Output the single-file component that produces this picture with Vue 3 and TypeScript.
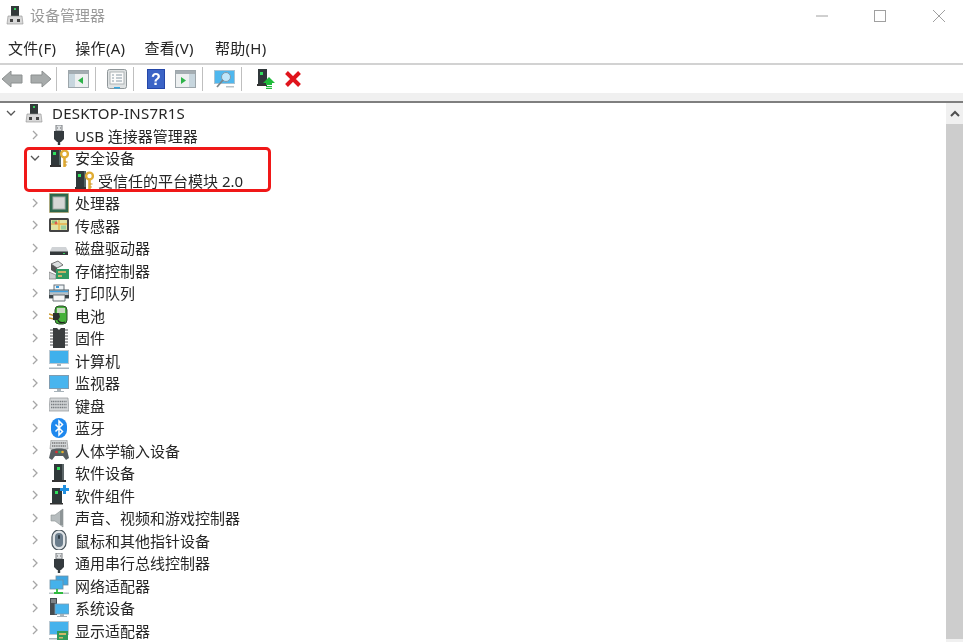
<script setup lang="ts">
interface Node { label: string; icon: string; open?: boolean; child?: boolean }
const rows: Node[] = [
  { label: 'USB 连接器管理器', icon: 'usb' },
  { label: '安全设备', icon: 'sec', open: true },
  { label: '受信任的平台模块 2.0', icon: 'sec', child: true },
  { label: '处理器', icon: 'cpu' },
  { label: '传感器', icon: 'sensor' },
  { label: '磁盘驱动器', icon: 'disk' },
  { label: '存储控制器', icon: 'storage' },
  { label: '打印队列', icon: 'printer' },
  { label: '电池', icon: 'battery' },
  { label: '固件', icon: 'firmware' },
  { label: '计算机', icon: 'computer' },
  { label: '监视器', icon: 'monitor' },
  { label: '键盘', icon: 'keyboard' },
  { label: '蓝牙', icon: 'bt' },
  { label: '人体学输入设备', icon: 'hid' },
  { label: '软件设备', icon: 'soft' },
  { label: '软件组件', icon: 'softc' },
  { label: '声音、视频和游戏控制器', icon: 'sound' },
  { label: '鼠标和其他指针设备', icon: 'mouse' },
  { label: '通用串行总线控制器', icon: 'usb' },
  { label: '网络适配器', icon: 'net' },
  { label: '系统设备', icon: 'sys' },
  { label: '显示适配器', icon: 'display' },
]
const menus = ['文件(F)', '操作(A)', '查看(V)', '帮助(H)']
</script>

<template>
  <div class="win">
    <svg class="defs" aria-hidden="true">
      <symbol id="host" viewBox="0 0 20 20">
        <path d="M6 1h8v10H6z" fill="#33393a"/><rect x="9" y="3" width="2" height="2" fill="#35d05a"/>
        <path d="M3 11h14l1 8H2z" fill="#d9d9d9" stroke="#8f8f8f" stroke-width=".6"/>
        <rect x="5" y="14" width="3" height="3" fill="#444"/><rect x="12" y="14" width="3" height="3" fill="#444"/>
      </symbol>
      <symbol id="tower" viewBox="0 0 20 20">
        <path d="M5 1h10v16H5z" fill="#30383a"/><path d="M13 1h2v16h-2z" fill="#5c6668"/>
        <rect x="8" y="4" width="3" height="3" fill="#2fe05c"/><path d="M3 17h14v2H3z" fill="#333"/>
      </symbol>
      <symbol id="usb" viewBox="0 0 20 20">
        <path d="M7 0h6v6H7z" fill="#dfe2e4" stroke="#7a7f82"/><path d="M5 6h10v8l-3 3H8l-3-3z" fill="#343a3e"/>
        <path d="M10 16v4" stroke="#343a3e" stroke-width="2.400"/><path d="M8 3h1M11 3h1" stroke="#666"/>
      </symbol>
      <symbol id="sec" viewBox="0 0 20 20">
        <path d="M2 1h10v16H2z" fill="#30383a"/><path d="M10 1h2v16h-2z" fill="#566"/>
        <rect x="4" y="4" width="3" height="3" fill="#2fe05c"/><path d="M1 17h11v2H1z" fill="#333"/>
        <circle cx="15.500" cy="6" r="3.400" fill="none" stroke="#e0ad35" stroke-width="2.400"/>
        <path d="M15.500 9v10" stroke="#e0ad35" stroke-width="2.600"/><path d="M15.500 14h3M15.500 17h2.400" stroke="#c9932a" stroke-width="1.200"/>
      </symbol>
      <symbol id="cpu" viewBox="0 0 20 20">
        <rect x=".5" y=".5" width="19" height="19" fill="#2a5f48" stroke="#c0a25a" stroke-dasharray="1 1"/>
        <rect x="1.500" y="1.500" width="17" height="17" fill="#2f6b4e"/>
        <rect x="4" y="4" width="12" height="12" fill="#d6d8d6" stroke="#a8aeab"/>
      </symbol>
      <symbol id="sensor" viewBox="0 0 20 20">
        <rect x="0" y="3" width="20" height="14" rx="1.500" fill="#444"/>
        <rect x="2" y="5" width="16" height="10" fill="#dfe3a2"/>
        <path d="M2 9h16M10 5v10" stroke="#e8b04b" stroke-width="1.400"/>
        <rect x="3" y="5.500" width="5" height="3" fill="#8fc77a"/><rect x="12" y="10.500" width="5" height="4" fill="#9ad0a0"/>
        <circle cx="7" cy="8" r="1.400" fill="#e05a50"/>
      </symbol>
      <symbol id="disk" viewBox="0 0 20 20">
        <path d="M3 9h14l2 4v4H1v-4z" fill="#d0d3d6"/><path d="M1 13.500h18v3.500H1z" fill="#33383b"/>
        <rect x="14" y="15" width="2" height="1" fill="#39d060"/>
      </symbol>
      <symbol id="storage" viewBox="0 0 20 20">
        <path d="M2 4l7-3 5 4-6 3z" fill="#dcdfe0" stroke="#555" stroke-width=".8"/>
        <path d="M2 4l6 4v6L2 10z" fill="#555"/><path d="M0 12l7 3v4H0z" fill="#c9cdcf" stroke="#666" stroke-width=".6"/>
        <rect x="7" y="9" width="13" height="10" fill="#2f9a62"/><path d="M9 11h8v2H9zM9 15h4v2H9z" fill="#c9b36a"/>
      </symbol>
      <symbol id="printer" viewBox="0 0 20 20">
        <rect x="5" y="2" width="10" height="6" fill="#eef3f6" stroke="#68737a"/><path d="M7 4h3" stroke="#3b9ad8" stroke-width="2"/>
        <path d="M0 7h20v8H0z" fill="#b8c0c5" stroke="#4f5a60"/><path d="M1 8.500h18" stroke="#3fa0e0" stroke-width="1.400"/>
        <path d="M4 12h12v6H4z" fill="#f5f5f5" stroke="#6a7276"/><path d="M0 12h4v3H0zM16 12h4v3h-4z" fill="#3c4448"/>
      </symbol>
      <symbol id="battery" viewBox="0 0 20 20">
        <rect x="6" y="1" width="12" height="18" rx="4" fill="#45b13a" stroke="#2b4d2b"/>
        <path d="M8 3h8v5H8z" fill="#c8d8c2"/>
        <path d="M0 9l6 2M0 13l5 1" stroke="#c89a30" stroke-width="1.400"/>
        <path d="M4 8h6l1 4-2 3H4z" fill="#2d3230"/><path d="M9 15c1 3 4 3 7 2" stroke="#222" stroke-width="1.300" fill="none"/>
      </symbol>
      <symbol id="firmware" viewBox="0 0 20 20">
        <path d="M4 0h4l2 2 2-2h4v20H4z" fill="#3a3d3f"/>
        <path d="M1 2h3M1 5h3M1 8h3M1 11h3M1 14h3M1 17h3M16 2h3M16 5h3M16 8h3M16 11h3M16 14h3M16 17h3" stroke="#8a8c8e" stroke-width="1.400"/>
      </symbol>
      <symbol id="computer" viewBox="0 0 20 20">
        <rect x="0" y="0" width="20" height="14" fill="#b9c8d2"/><rect x="1" y="1" width="18" height="12" fill="#3fb0ec"/>
        <path d="M8 14h4v2H8z" fill="#a8b3ba"/><path d="M0 17.500h20V19H0z" fill="#a7b4bd"/>
      </symbol>
      <symbol id="monitor" viewBox="0 0 20 20">
        <rect x="0" y="2" width="20" height="14" fill="#7f9cb0"/><rect x="1" y="3" width="18" height="12" fill="#49b5ee"/>
        <path d="M8 16h4v2H8zM5 18h10v1H5z" fill="#a8b3ba"/>
      </symbol>
      <symbol id="keyboard" viewBox="0 0 20 20">
        <path d="M1 3h18l1 13H0z" fill="#d4d7d9" stroke="#8c9194" stroke-width=".7"/>
        <path d="M2 6.500h16M2 9.500h16M2 12.500h16" stroke="#777c80" stroke-width="1.500" stroke-dasharray="1.200 .6"/>
      </symbol>
      <symbol id="bt" viewBox="0 0 20 20">
        <rect x="2" y="0" width="16" height="20" rx="8" fill="#1e88ee"/>
        <path d="M6.500 6.500l7 7-3.500 3.500V3l3.500 3.500-7 7" fill="none" stroke="#fff" stroke-width="1.500"/>
      </symbol>
      <symbol id="hid" viewBox="0 0 20 20">
        <path d="M2 0h16l1 9H1z" fill="#d4d7d9" stroke="#888" stroke-width=".6"/>
        <path d="M3 3h14M3 6h14" stroke="#777" stroke-width="1.300" stroke-dasharray="1.200 .6"/>
        <path d="M2 10c2-2 14-2 16 0l2 8-3 2-3-4H6l-3 4-3-2z" fill="#565d61"/>
        <circle cx="7.500" cy="12" r="1.300" fill="#d33"/><circle cx="10.500" cy="12" r="1.300" fill="#3a6"/><circle cx="13.500" cy="12" r="1.300" fill="#e8b030"/>
      </symbol>
      <symbol id="soft" viewBox="0 0 20 20"><use href="#tower"/></symbol>
      <symbol id="softc" viewBox="0 0 20 20">
        <path d="M3 3h10v15H3z" fill="#30383a"/><rect x="6" y="6" width="3" height="3" fill="#2fe05c"/>
        <path d="M1 18h13v1.500H1z" fill="#333"/><path d="M14 0h3v3h3v3h-3v3h-3V6h-3V3h3z" fill="#1f8fe0"/>
      </symbol>
      <symbol id="sound" viewBox="0 0 20 20">
        <path d="M2 7h4l8-6v18l-8-6H2z" fill="#b6bcbe" stroke="#8a9092" stroke-width=".6"/><path d="M11 3v14h3V1z" fill="#8d9496"/>
      </symbol>
      <symbol id="mouse" viewBox="0 0 20 20">
        <rect x="3" y="0" width="14" height="20" rx="7" fill="#dfe3e6" stroke="#46525a" stroke-width="1.200"/>
        <rect x="6" y="3" width="8" height="14" rx="4" fill="#6b7d8c"/><rect x="9" y="5" width="2" height="4" rx="1" fill="#2f3c46"/>
      </symbol>
      <symbol id="net" viewBox="0 0 20 20">
        <rect x="7" y="1" width="12" height="9" fill="#3ea6e2" stroke="#6f8fa3" stroke-width=".8"/>
        <rect x="1" y="5" width="13" height="9" fill="#45b2ec" stroke="#6f8fa3" stroke-width=".8"/>
        <path d="M0 17.500h20V19H0z" fill="#bcc5c9"/><path d="M8 14v4M5 18h9" stroke="#2fbb3f" stroke-width="1.800"/>
      </symbol>
      <symbol id="sys" viewBox="0 0 20 20">
        <rect x="1" y="0" width="7" height="17" fill="#444b4f"/><path d="M2 2h5M2 4h5" stroke="#b5bcc0"/>
        <rect x="6" y="6" width="14" height="10" fill="#45b2ec" stroke="#7f9cb0" stroke-width=".8"/>
        <path d="M11 16h4v2h-4zM8 18h10v1H8z" fill="#a8b3ba"/>
      </symbol>
      <symbol id="display" viewBox="0 0 20 20">
        <rect x="0" y="1" width="20" height="14" fill="#b9c8d2"/><rect x="1" y="2" width="18" height="12" fill="#45b2ec"/>
        <path d="M0 18h9v1.500H0z" fill="#aab5bb"/><rect x="8" y="11" width="11" height="9" fill="#2f9a5a"/>
        <path d="M10 13h7v2h-7zM10 17h4v1.500h-4z" fill="#cdb868"/>
      </symbol>
    </svg>

    <header class="titlebar">
      <svg class="title-icon"><use href="#host"/></svg>
      <span class="title">设备管理器</span>
      <div class="caps">
        <svg width="14" height="14" viewBox="0 0 14 14"><path d="M2 7h12" stroke="#a0a0a0"/></svg>
        <svg width="14" height="14" viewBox="0 0 14 14"><rect x="1.500" y="1.500" width="11" height="11" fill="none" stroke="#a0a0a0"/></svg>
        <svg width="14" height="14" viewBox="0 0 14 14"><path d="M1 1l12 12M13 1L1 13" stroke="#a0a0a0"/></svg>
      </div>
    </header>

    <nav class="menubar"><span v-for="m in menus" :key="m">{{ m }}</span></nav>

    <div class="toolbar">
      <svg class="tb tb-back" width="22" height="18" viewBox="0 0 22 18"><path d="M1 9l9-8v4h11v8H10v4z" fill="#a7abab" stroke="#8c9090"/></svg>
      <svg class="tb tb-fwd" width="22" height="18" viewBox="0 0 22 18"><path d="M21 9l-9-8v4H1v8h11v4z" fill="#a7abab" stroke="#8c9090"/></svg>
      <i class="sep s1"></i>
      <svg class="tb" width="21" height="18" viewBox="0 0 21 18">
        <rect x=".5" y=".5" width="20" height="17" fill="#edf0f1" stroke="#9da6ab"/><path d="M1 1h19v3H1z" fill="#a4adb2"/>
        <path d="M1 4h6v13H1z" fill="#c7d6de"/><path d="M15 7v7l-5-3.500z" fill="#2eb34a"/>
      </svg>
      <i class="sep"></i>
      <svg class="tb" width="20" height="20" viewBox="0 0 20 20">
        <rect x=".5" y=".5" width="19" height="19" rx="2" fill="#dfe2e3" stroke="#8f9699"/><rect x="3" y="3" width="14" height="12" fill="#fbfbfb" stroke="#adb3b6"/>
        <path d="M5 6h2M9 6h6M5 9h2M9 9h6M5 12h2M9 12h6" stroke="#8a9aa5"/><path d="M7 18h6v1.500H7z" fill="#35a7e0"/>
      </svg>
      <i class="sep"></i>
      <svg class="tb tb-help" width="18" height="20" viewBox="0 0 18 20">
        <rect width="18" height="20" fill="#2446a8"/><path d="M1 1h16v18H1z" fill="#3b64c6"/>
        <text x="9" y="16" text-anchor="middle" class="q">?</text>
      </svg>
      <svg class="tb tb-view" width="21" height="18" viewBox="0 0 21 18">
        <rect x=".5" y=".5" width="20" height="17" fill="#edf0f1" stroke="#9da6ab"/><path d="M1 1h19v3H1z" fill="#a4adb2"/>
        <path d="M14 4h6v13h-6z" fill="#c7d6de"/><path d="M6 7v7l5-3.500z" fill="#2eb34a"/>
      </svg>
      <i class="sep"></i>
      <svg class="tb" width="21" height="19" viewBox="0 0 21 19">
        <rect x=".5" y=".5" width="20" height="13" fill="#4eb7ee" stroke="#a9c3d2"/>
        <circle cx="12" cy="7" r="4.500" fill="#bfe6fa" stroke="#7f9aab"/><path d="M9 10l-6 7" stroke="#7d868b" stroke-width="1.800"/>
        <path d="M12 16h8v1.500h-8z" fill="#b9c2c7"/>
      </svg>
      <i class="sep s2"></i>
      <svg class="tb" width="18" height="20" viewBox="0 0 18 20">
        <path d="M1 0h9v15H1z" fill="#30383a"/><rect x="3" y="3" width="3" height="3" fill="#2fe05c"/><path d="M0 15h10v2H0z" fill="#333"/>
        <path d="M12 8l6 6h-3v2H9v-2H6z" fill="#20bb3b"/><path d="M9 17h6v1.200H9zM9 19h6v1H9z" fill="#20bb3b"/>
      </svg>
      <svg class="tb tb-x" width="18" height="18" viewBox="0 0 18 18"><path d="M2.500 2.500l13 13M15.500 2.500l-13 13" stroke="#e0141c" stroke-width="4"/></svg>
    </div>

    <div class="strip"></div>

    <main class="body">
      <div class="tree">
        <div class="row root">
          <svg class="chev dark" viewBox="0 0 12 12"><path d="M2 4l4 4 4-4" fill="none"/></svg>
          <svg class="ico"><use href="#host"/></svg>
          <span>DESKTOP-INS7R1S</span>
        </div>
        <div v-for="r in rows" :key="r.label" class="row" :class="{ child: r.child }">
          <svg v-if="!r.child" class="chev" :class="{ dark: r.open }" viewBox="0 0 12 12">
            <path :d="r.open ? 'M2 4l4 4 4-4' : 'M4 2l4 4-4 4'" fill="none"/>
          </svg>
          <svg class="ico"><use :href="'#' + r.icon"/></svg>
          <span>{{ r.label }}</span>
        </div>
      </div>
      <div class="scroll">
        <div class="sb-up"><svg width="10" height="8" viewBox="0 0 10 8"><path d="M1 6l4-4 4 4" fill="none" stroke="#505050" stroke-width="2"/></svg></div>
        <div class="sb-thumb"></div>
      </div>
      <div class="mark"></div>
    </main>
  </div>
</template>

<style scoped>
.win {
  width: 963px;
  height: 642px;
  overflow: hidden;
  position: relative;
  background: #fff;
  color: #262626;
  font: 15px "Noto Sans", "Noto Sans CJK SC", sans-serif;
  filter: blur(0.35px);
  display: flex;
  flex-direction: column;
}
.defs { position: absolute; width: 0; height: 0; }
.titlebar {
  height: 32px;
  flex: none;
  display: flex;
  align-items: center;
  padding-left: 5px;
}
.title-icon { width: 20px; height: 20px; margin-bottom: 3px; }
.title { margin-left: 5px; margin-bottom: 4px; color: #9a9a9a; }
.caps {
  margin-left: auto;
  display: flex;
  gap: 45px;
  padding-right: 17px;
}
.menubar {
  height: 29px;
  padding-top: 2px;
  flex: none;
  display: flex;
  align-items: center;
  gap: 19px;
  padding-left: 8px;
  border-bottom: 2px solid #d2d2d2;
  line-height: 1;
  letter-spacing: 0.3px;
}
.menubar span:last-child { margin-left: 2px; }
.toolbar {
  height: 28px;
  flex: none;
  display: flex;
  align-items: center;
  padding-left: 1px;
}
.tb { flex: none; }
.tb-fwd { margin-left: 7px; }
.tb-help { margin-left: 2px; }
.tb-view { margin-left: 10px; }
.tb-x { margin-left: 9px; }
.sep {
  width: 1px;
  height: 24px;
  background: #bfbfbf;
  margin: 0 11px 0 6px;
  flex: none;
}
.sep.s1 { margin-left: 4px; }
.sep.s2 { margin-right: 15px; }
.strip {
  height: 8px;
  flex: none;
  background: #f0f0f0;
  border-bottom: 2px solid #7f7f7f;
}
.body { flex: 1; display: flex; position: relative; min-height: 0; }
.tree { flex: 1; margin-top: -1.500px; }
.row {
  height: 22.5px;
  display: flex;
  align-items: center;
  padding-left: 29px;
  white-space: nowrap;
}
.row.root { padding-left: 5px; letter-spacing: 0.2px; }
.row.child { padding-left: 74px; }
.chev { width: 12px; height: 12px; margin-right: 8px; flex: none; }
.chev path { stroke: #a6a6a6; stroke-width: 1.300; }
.chev.dark path { stroke: #555; }
.ico { width: 20px; height: 20px; margin-right: 6px; flex: none; }
.row.root .chev { margin-right: 7px; }
.row.root .ico { margin-right: 8px; }
.row.child .ico { margin-right: 4px; }
.scroll {
  width: 17px;
  flex: none;
  display: flex;
  flex-direction: column;
  background: #f0f0f0;
  padding-bottom: 3px;
}
.sb-up { height: 21px; display: flex; align-items: center; justify-content: center; }
.sb-thumb { flex: 1; background: #cdcdcd; }
.mark {
  position: absolute;
  left: 24px;
  top: 44px;
  width: 241px;
  height: 39px;
  border: 3px solid #f01818;
  border-radius: 5px;
}
.q { font: bold 16px "Liberation Sans", sans-serif; fill: #fff; }
</style>
